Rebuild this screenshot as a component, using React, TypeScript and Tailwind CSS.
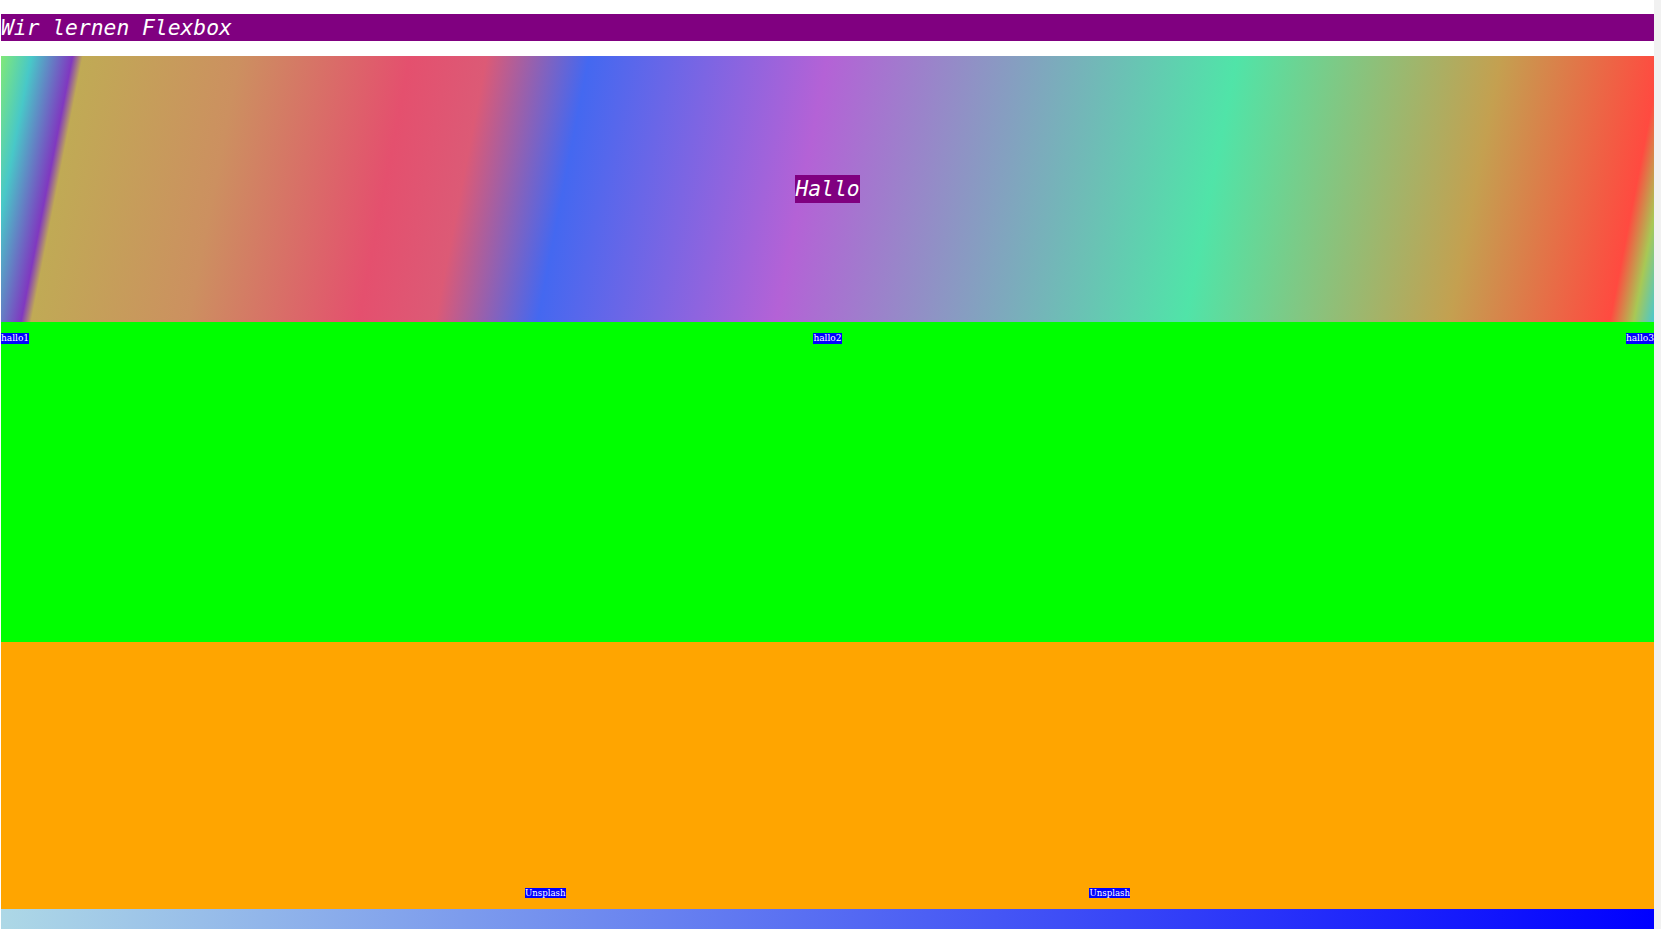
export default function App() {
  return (
    <div className="w-[1661px] h-[929px] overflow-hidden bg-white flex">
      <div className="w-[1653px] ml-[1px] flex flex-col">
        {/* Überschrift */}
        <h1 className="shrink-0 mt-[14px] h-[27px] bg-[#800080] text-white italic font-['DejaVu_Sans_Mono',monospace] text-[21.3px] leading-[27px] font-normal">
          Wir lernen Flexbox
        </h1>

        {/* Hero mit Verlauf */}
        <div className="shrink-0 mt-[15px] h-[266px] flex items-center justify-center bg-[linear-gradient(101deg,#80e878_0%,#48c8c8_1.8%,#8038c0_4.2%,#c0aa55_4.8%,#cc9060_14%,#e4506e_24%,#dc5a76_28.5%,#4468f0_34.5%,#b462d6_48.5%,#50e4a8_72.5%,#c4a050_88%,#ff4a40_97.4%,#a8c855_98.8%,#48c8d0_100%)]">
          <span className="inline-block h-[28px] bg-[#800080] text-white italic font-['DejaVu_Sans_Mono',monospace] text-[21.3px] leading-[28px]">
            Hallo
          </span>
        </div>

        {/* grüne Zeile */}
        <div className="shrink-0 h-[320px] bg-[#00ff00] flex justify-between items-start pt-[11px]">
          <span className="bg-[#0000ff] text-white font-['DejaVu_Serif',serif] text-[9px] leading-[10.5px]">hallo1</span>
          <span className="bg-[#0000ff] text-white font-['DejaVu_Serif',serif] text-[9px] leading-[10.5px]">hallo2</span>
          <span className="bg-[#0000ff] text-white font-['DejaVu_Serif',serif] text-[9px] leading-[10.5px]">hallo3</span>
        </div>

        {/* orange Zeile */}
        <div className="shrink-0 h-[267px] bg-[#ffa500] flex justify-evenly items-end pb-[11px]">
          <span className="bg-[#0000ff] text-white font-['DejaVu_Serif',serif] text-[8.6px] leading-[10.5px]">Unsplash</span>
          <span className="bg-[#0000ff] text-white font-['DejaVu_Serif',serif] text-[8.6px] leading-[10.5px]">Unsplash</span>
        </div>

        {/* Fußzeile */}
        <div className="shrink-0 h-[40px] bg-[linear-gradient(to_right,#add8e6,#0000ff)]" />
      </div>
      <div className="w-[7px] bg-[#f1f1f1]" />
    </div>
  );
}
